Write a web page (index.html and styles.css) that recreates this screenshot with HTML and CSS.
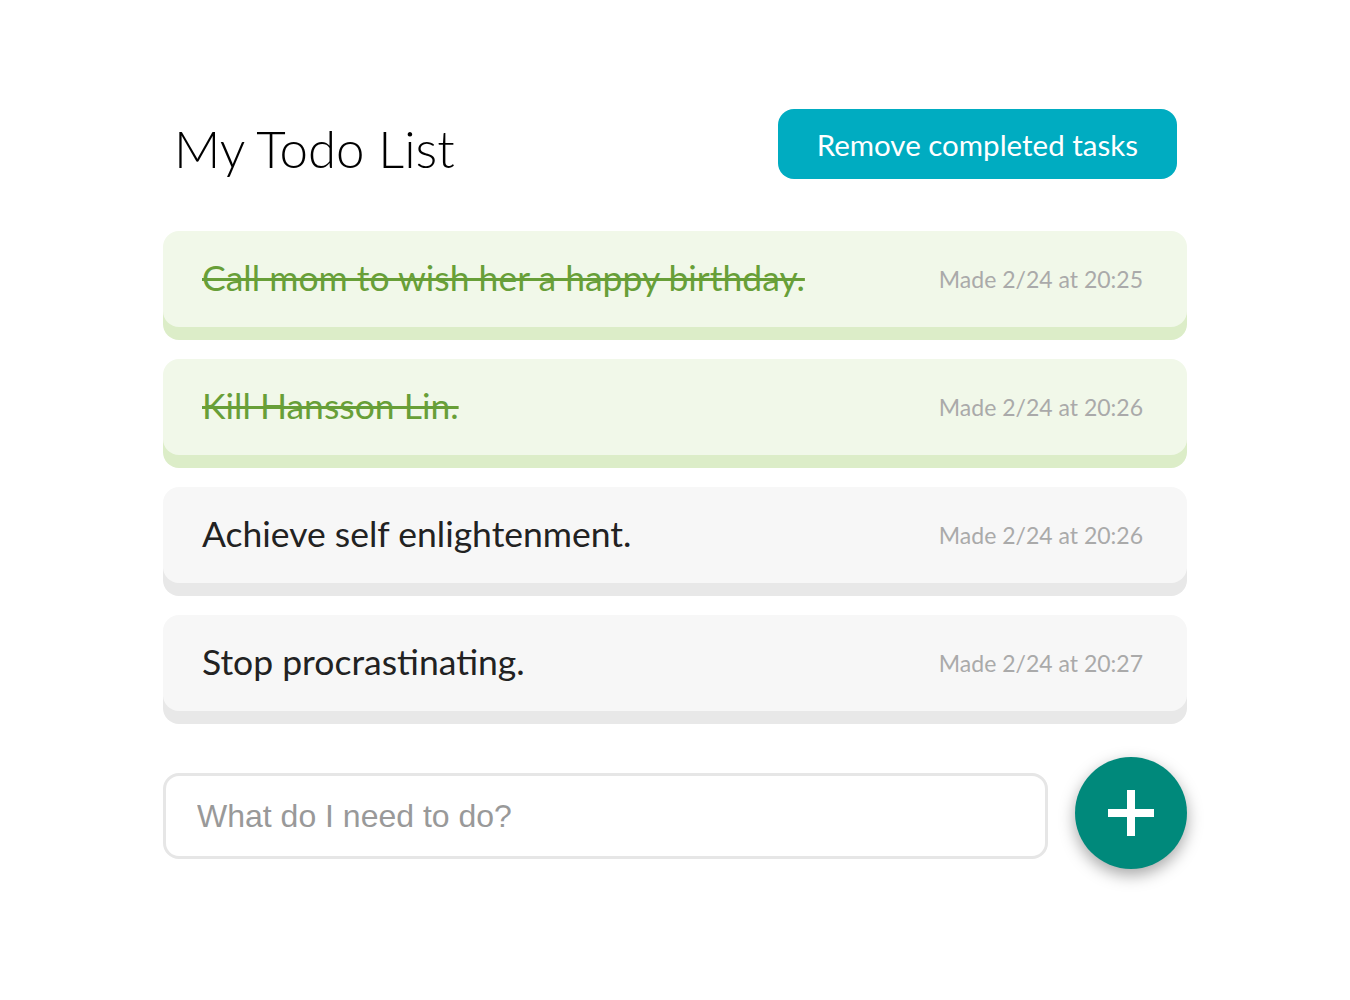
FILE: index.html
```html
<!DOCTYPE html>
<html lang="en">
<head>
<meta charset="utf-8">
<title>My Todo List</title>
<link rel="stylesheet" href="styles.css">
</head>
<body>
<main class="app">
  <header class="header">
    <h1 class="title">My Todo List</h1>
    <button class="remove-btn" type="button">Remove completed tasks</button>
  </header>

  <ul class="todo-list">
    <li class="todo todo--done">
      <span class="todo__text">Call mom to wish her a happy birthday.</span>
      <span class="todo__date">Made 2/24 at 20:25</span>
    </li>
    <li class="todo todo--done">
      <span class="todo__text">Kill Hansson Lin.</span>
      <span class="todo__date">Made 2/24 at 20:26</span>
    </li>
    <li class="todo">
      <span class="todo__text">Achieve self enlightenment.</span>
      <span class="todo__date">Made 2/24 at 20:26</span>
    </li>
    <li class="todo">
      <span class="todo__text">Stop procrastinating.</span>
      <span class="todo__date">Made 2/24 at 20:27</span>
    </li>
  </ul>

  <form class="add-form">
    <input class="add-input" type="text" placeholder="What do I need to do?">
    <button class="add-btn" type="button" aria-label="Add task">
      <svg class="add-icon" width="48" height="48" viewBox="0 0 48 48" aria-hidden="true">
        <rect x="1" y="20" width="46" height="8" fill="#fff"/>
        <rect x="20" y="1" width="8" height="46" fill="#fff"/>
      </svg>
    </button>
  </form>
</main>
</body>
</html>
```
FILE: styles.css
```css
* {
  box-sizing: border-box;
}

html, body {
  background: #ffffff;
}

body {
  margin: 0;
  padding: 109px 0 40px;
  min-height: 100vh;
  font-family: "Lato", "Open Sans", sans-serif;
  color: #222222;
}

.app {
  width: 1024px;
  margin: 0 auto;
}

.header {
  display: flex;
  align-items: center;
  justify-content: space-between;
  padding: 0 10px 0 11px;
  height: 70px;
}

.title {
  margin: 8px 0 0 0;
  font-size: 51px;
  font-weight: 300;
  color: #000000;
  line-height: 1;
}

.remove-btn {
  height: 70px;
  padding: 0 39px;
  border: none;
  border-radius: 16px;
  background: #00acc1;
  color: #ffffff;
  font-family: "Lato", "Open Sans", sans-serif;
  font-size: 29.5px;
  font-weight: 400;
  cursor: pointer;
}

.todo-list {
  list-style: none;
  margin: 52px 0 0 0;
  padding: 0;
  display: flex;
  flex-direction: column;
  gap: 32px;
}

.todo {
  display: flex;
  align-items: center;
  justify-content: space-between;
  height: 96px;
  padding: 0 44px 0 39px;
  border-radius: 16px;
  background: #f7f7f7;
  box-shadow: 0 13px 0 #e8e8e8;
}

.todo__text {
  font-size: 35.5px;
  color: #222222;
  line-height: 1;
  margin-top: -2px;
}

.todo__date {
  font-size: 23px;
  color: #aaaaaa;
  line-height: 1;
}

.todo--done {
  background: #f1f8e9;
  box-shadow: 0 13px 0 #dcedc8;
}

.todo--done .todo__text {
  color: #689f38;
  text-decoration: line-through;
  text-decoration-thickness: 3px;
}

.add-form {
  display: flex;
  align-items: flex-start;
  justify-content: space-between;
  margin-top: 46px;
}

.add-input {
  width: 885px;
  height: 86px;
  margin-top: 16px;
  padding: 0 31px;
  border: 3px solid #e6e6e6;
  border-radius: 16px;
  font-family: "Liberation Sans", Arial, sans-serif;
  font-size: 32px;
  color: #222222;
  background: #ffffff;
  outline: none;
}

.add-input::placeholder {
  color: #999999;
}

.add-btn {
  width: 112px;
  height: 112px;
  padding: 0;
  border: none;
  border-radius: 50%;
  background: #00897b;
  box-shadow: 0 6px 16px rgba(0, 0, 0, 0.35);
  display: flex;
  align-items: center;
  justify-content: center;
  cursor: pointer;
}

.add-icon {
  display: block;
}
```
